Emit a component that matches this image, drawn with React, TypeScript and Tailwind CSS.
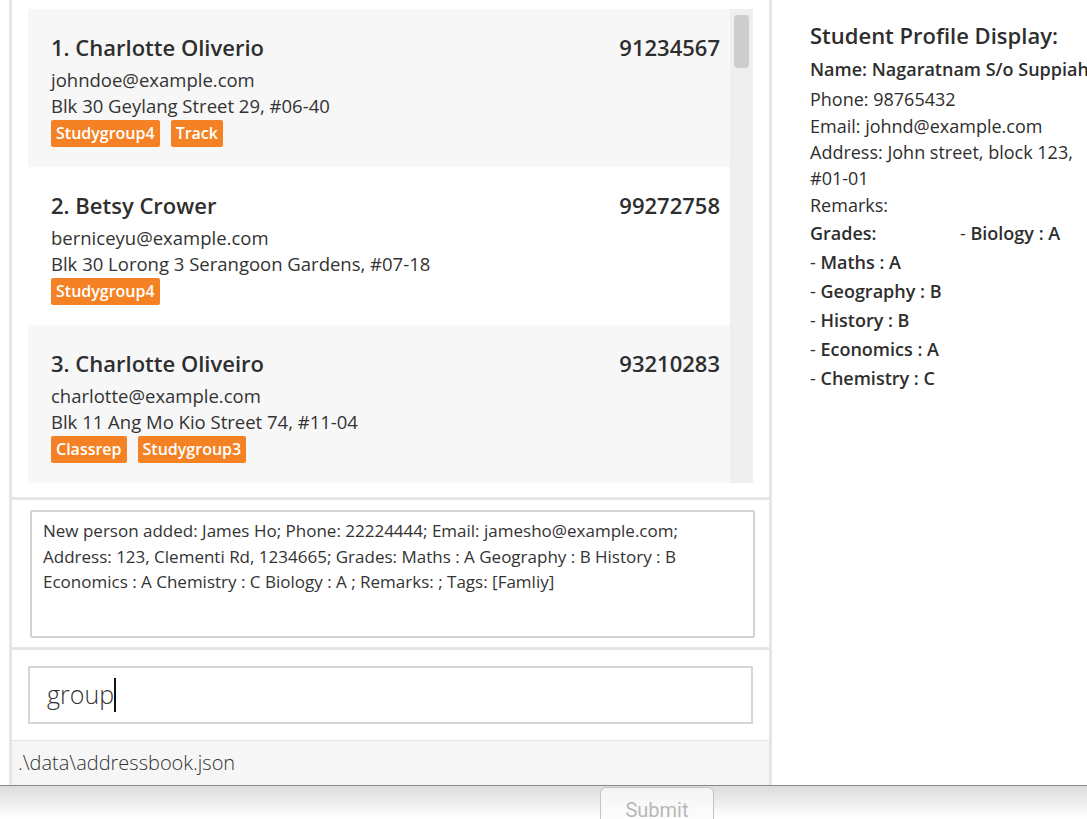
import React from "react";

const persons = [
  {
    idx: 1,
    name: "Charlotte Oliverio",
    phone: "91234567",
    email: "johndoe@example.com",
    address: "Blk 30 Geylang Street 29, #06-40",
    tags: ["Studygroup4", "Track"],
  },
  {
    idx: 2,
    name: "Betsy Crower",
    phone: "99272758",
    email: "berniceyu@example.com",
    address: "Blk 30 Lorong 3 Serangoon Gardens, #07-18",
    tags: ["Studygroup4"],
  },
  {
    idx: 3,
    name: "Charlotte Oliveiro",
    phone: "93210283",
    email: "charlotte@example.com",
    address: "Blk 11 Ang Mo Kio Street 74, #11-04",
    tags: ["Classrep", "Studygroup3"],
  },
];

const grades = [
  ["Maths", "A"],
  ["Geography", "B"],
  ["History", "B"],
  ["Economics", "A"],
  ["Chemistry", "C"],
];

const font = "font-['Open_Sans','Noto_Sans',sans-serif]";

function PersonCard({ p }: { p: (typeof persons)[number] }) {
  return (
    <div className={`h-[158px] pl-[23px] pr-[10px] pt-[23px] ${p.idx % 2 === 1 ? "bg-[#f7f7f7]" : "bg-white"}`}>
      <div className="flex items-center justify-between h-[30px] mb-[5px]">
        <span className="text-[22px] font-semibold text-[#2e2e2e]">
          {p.idx}. {p.name}
        </span>
        <span className="text-[22px] font-semibold text-[#2e2e2e]">{p.phone}</span>
      </div>
      <div className="text-[18.5px] leading-[26px] text-[#333]">{p.email}</div>
      <div className="text-[18.5px] leading-[26px] text-[#333]">{p.address}</div>
      <div className="mt-[1px] flex gap-[11px]">
        {p.tags.map(t => (
          <span
            key={t}
            className="h-[27px] px-[5px] rounded-[2px] bg-[#f48225] text-white text-[16px] font-semibold leading-[27px]"
          >
            {t}
          </span>
        ))}
      </div>
    </div>
  );
}

export default function App() {
  return (
    <div className={`w-[1087px] h-[819px] overflow-hidden bg-white ${font}`}>
      {/* Window */}
      <div className="flex h-[786px] border-b border-[#8a8a8a]">
        {/* Left column */}
        <div className="ml-[9px] w-[763px] flex flex-col border-x-[3px] border-[#e6e6e6]">
          {/* Person list */}
          <div className="h-[500px] shrink-0 pt-[9px] pl-[16px] pr-[16px] border-b-[3px] border-[#e6e6e6]">
            <div className="flex h-[474px]">
              <div className="w-[702px] overflow-hidden">
                {persons.map(p => (
                  <PersonCard key={p.idx} p={p} />
                ))}
              </div>
              <div className="w-[23px] bg-[#efefef] pt-[6px] flex justify-center">
                <div className="w-[15px] h-[53px] rounded-[4px] bg-[#cdcdcd]" />
              </div>
            </div>
          </div>

          {/* Result display */}
          <div className="h-[150px] shrink-0 pt-[10px] pl-[18px] pr-[14px] border-b-[3px] border-[#e6e6e6]">
            <div className="h-[128px] border-2 border-[#d2d2d2] rounded-[2px] px-[11px] pt-[6px] text-[17px] leading-[25.5px] text-[#333]">
              New person added: James Ho; Phone: 22224444; Email: jamesho@example.com;
              <br />
              Address: 123, Clementi Rd, 1234665; Grades: Maths : A Geography : B History : B
              <br />
              Economics : A Chemistry : C Biology : A ; Remarks: ; Tags: [Famliy]
            </div>
          </div>

          {/* Command box */}
          <div className="h-[90px] shrink-0 pt-[16px] pl-[16px] pr-[16px]">
            <div className="h-[58px] border-2 border-[#d6d6d6] flex items-center pl-[17px]">
              <span className="text-[25px] font-light text-[#333]">group</span>
              <span className="w-[2px] h-[34px] bg-[#111]" />
            </div>
          </div>

          {/* Status bar */}
          <div className="flex-1 bg-[#f6f6f6] border-t border-[#e4e4e4] pl-[6px] flex items-center">
            <span className="text-[20px] font-light text-[#333]">.\data\addressbook.json</span>
          </div>
        </div>

        {/* Right column: profile */}
        <div className="flex-1 overflow-hidden pl-[38px] pt-[20px] text-[#2e2e2e] whitespace-nowrap">
          <div className="text-[22px] font-semibold leading-[30px]">Student Profile Display:</div>
          <div className="mt-[4px] text-[18px] font-semibold leading-[30px]">Name: Nagaratnam S/o Suppiah</div>
          <div className="mt-[2px] text-[18px] leading-[26px]">Phone: 98765432</div>
          <div className="mt-[1px] text-[18px] leading-[26px]">Email: johnd@example.com</div>
          <div className="text-[18px] leading-[26px]">Address: John street, block 123,</div>
          <div className="text-[18px] leading-[26px]">#01-01</div>
          <div className="mt-[1px] text-[18px] leading-[26px]">Remarks:</div>
          <div className="mt-[1px] text-[18px] leading-[29px] flex">
            <span className="w-[150px] font-semibold">Grades:</span>
            <span>
              - <span className="font-semibold">Biology : A</span>
            </span>
          </div>
          {grades.map(([s, g]) => (
            <div key={s} className="text-[18px] leading-[29px]">
              - <span className="font-semibold">
                {s} : {g}
              </span>
            </div>
          ))}
        </div>
      </div>

      {/* Bottom strip */}
      <div className="h-[33px] bg-gradient-to-b from-[#dcdcdc] to-white flex">
        <div className="ml-[600px] w-[114px] h-[40px] mt-[1px] border border-[#c4c4c4] rounded-t-[6px] bg-gradient-to-b from-[#f4f4f4] to-white flex justify-center pt-[10px]">
          <span className="font-['Roboto',sans-serif] text-[20px] text-[#b8b8b8] leading-[24px]">Submit</span>
        </div>
      </div>
    </div>
  );
}
